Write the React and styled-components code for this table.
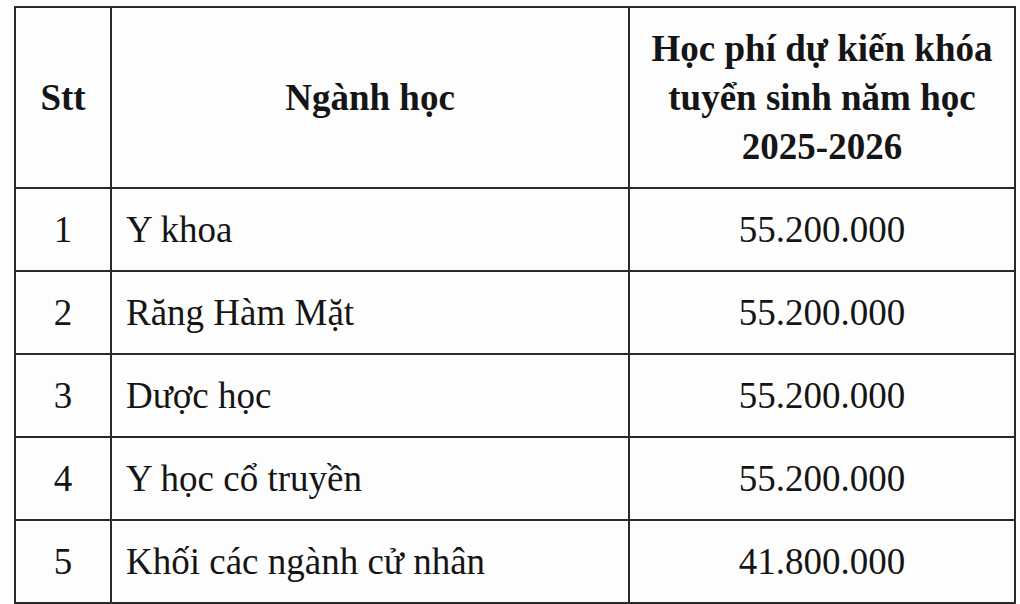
import styled, { createGlobalStyle } from "styled-components";

const GlobalStyle = createGlobalStyle`
  html, body {
    margin: 0;
    padding: 0;
    background: #fdfdfd;
  }
`;

const Page = styled.div`
  width: 1020px;
  height: 604px;
  overflow: hidden;
  padding: 6px 0 0 14px;
  box-sizing: border-box;
  font-family: "Liberation Serif", "Times New Roman", serif;
  color: #151515;
`;

const Table = styled.table`
  border-collapse: collapse;
  table-layout: fixed;
  width: 1000px;
`;

const HeadCell = styled.th`
  border: 2px solid #2a2a2a;
  font-weight: bold;
  font-size: 37px;
  line-height: 49px;
  text-align: center;
  vertical-align: middle;
  padding: 0 6px;
`;

const HeadRow = styled.tr`
  height: 181px;
`;

const Row = styled.tr`
  height: 83px;
`;

const Cell = styled.td`
  border: 2px solid #2a2a2a;
  font-size: 37px;
  vertical-align: middle;
  text-align: ${({ $align }) => $align || "left"};
  padding: ${({ $align }) => ($align ? "0" : "0 0 0 14px")};
  white-space: nowrap;
`;

const rows = [
  { stt: 1, name: "Y khoa", fee: "55.200.000" },
  { stt: 2, name: "Răng Hàm Mặt", fee: "55.200.000" },
  { stt: 3, name: "Dược học", fee: "55.200.000" },
  { stt: 4, name: "Y học cổ truyền", fee: "55.200.000" },
  { stt: 5, name: "Khối các ngành cử nhân", fee: "41.800.000" },
];

export default function App() {
  return (
    <>
      <GlobalStyle />
      <Page>
        <Table>
          <colgroup>
            <col style={{ width: 96 }} />
            <col style={{ width: 518 }} />
            <col style={{ width: 386 }} />
          </colgroup>
          <thead>
            <HeadRow>
              <HeadCell>Stt</HeadCell>
              <HeadCell>Ngành học</HeadCell>
              <HeadCell>
                Học phí dự kiến khóa
                <br />
                tuyển sinh năm học
                <br />
                2025-2026
              </HeadCell>
            </HeadRow>
          </thead>
          <tbody>
            {rows.map((r) => (
              <Row key={r.stt}>
                <Cell $align="center">{r.stt}</Cell>
                <Cell>{r.name}</Cell>
                <Cell $align="center">{r.fee}</Cell>
              </Row>
            ))}
          </tbody>
        </Table>
      </Page>
    </>
  );
}
